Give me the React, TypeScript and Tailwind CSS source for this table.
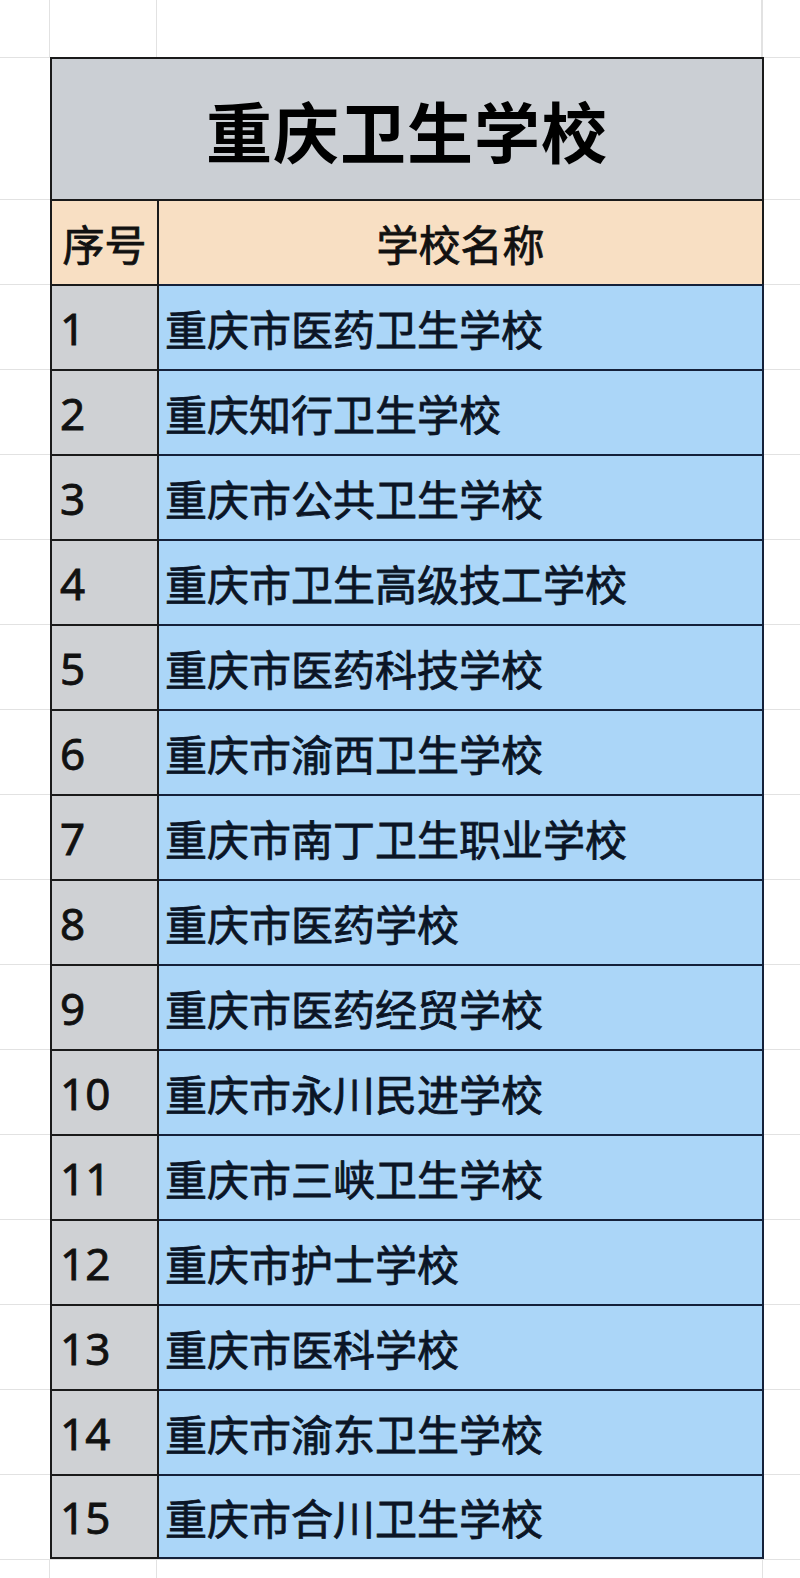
const schools = [
  "重庆市医药卫生学校",
  "重庆知行卫生学校",
  "重庆市公共卫生学校",
  "重庆市卫生高级技工学校",
  "重庆市医药科技学校",
  "重庆市渝西卫生学校",
  "重庆市南丁卫生职业学校",
  "重庆市医药学校",
  "重庆市医药经贸学校",
  "重庆市永川民进学校",
  "重庆市三峡卫生学校",
  "重庆市护士学校",
  "重庆市医科学校",
  "重庆市渝东卫生学校",
  "重庆市合川卫生学校",
];

const cjk = "font-['Noto_Sans_CJK_SC',sans-serif]";
// the screenshot's text sits between regular and bold
const medium = "[-webkit-text-stroke:0.8px_currentColor]";

function Gutter({ className = "" }: { className?: string }) {
  return <div className={`border-t border-[#e2e2e2] ${className}`} />;
}

export default function App() {
  return (
    <div className={`w-[800px] h-[1578px] bg-white overflow-hidden ${cjk}`}>
      {/* spreadsheet rows above the table */}
      <div className="flex h-[57px]">
        <div className="w-[50px] border-r border-[#e2e2e2]" />
        <div className="w-[107px] border-r border-[#e2e2e2]" />
        <div className="w-[606px] border-r-2 border-[#e2e2e2]" />
        <div className="flex-1" />
      </div>

      {/* title */}
      <div className="flex h-[142px]">
        <Gutter className="w-[50px]" />
        <div className="w-[714px] border-2 border-b-0 border-[#1a1a1a] bg-[#cbcfd4] flex items-center justify-center">
          <h1 className="text-[66px] font-bold text-black leading-none tracking-[1px]">
            重庆卫生学校
          </h1>
        </div>
        <Gutter className="flex-1" />
      </div>

      {/* header */}
      <div className="flex h-[85px]">
        <Gutter className="w-[50px]" />
        <div className={`w-[109px] border-2 border-b-0 border-[#1a1a1a] bg-[#f8dfc3] flex items-center justify-center text-[42px] text-[#111] ${medium}`}>
          序号
        </div>
        <div className={`w-[605px] border-t-2 border-r-2 border-[#1a1a1a] bg-[#f8dfc3] flex items-center justify-center text-[42px] text-[#111] ${medium}`}>
          学校名称
        </div>
        <Gutter className="flex-1" />
      </div>

      {schools.map((name, i) => {
        const last = i === schools.length - 1;
        return (
          <div key={name} className="flex h-[85px]">
            <Gutter className="w-[50px]" />
            <div
              className={`w-[109px] border-2 ${last ? "" : "border-b-0"} border-[#1a1a1a] bg-[#cfd1d4] flex items-center pl-[8px] font-['Noto_Sans',sans-serif] text-[44px] text-[#111] ${medium}`}
            >
              {i + 1}
            </div>
            <div
              className={`w-[605px] border-t-2 border-r-2 ${last ? "border-b-2" : ""} border-[#14213a] bg-[#abd6f8] flex items-center pl-[6px] text-[42px] text-[#0b1526] ${medium}`}
            >
              {name}
            </div>
            <Gutter className="flex-1" />
          </div>
        );
      })}

      {/* below the table */}
      <div className="flex h-[40px] border-t border-[#e2e2e2]">
        <div className="w-[50px] border-r border-[#e2e2e2]" />
        <div className="w-[107px] border-r border-[#e2e2e2]" />
        <div className="w-[606px] border-r border-[#e2e2e2]" />
        <div className="flex-1" />
      </div>
    </div>
  );
}
